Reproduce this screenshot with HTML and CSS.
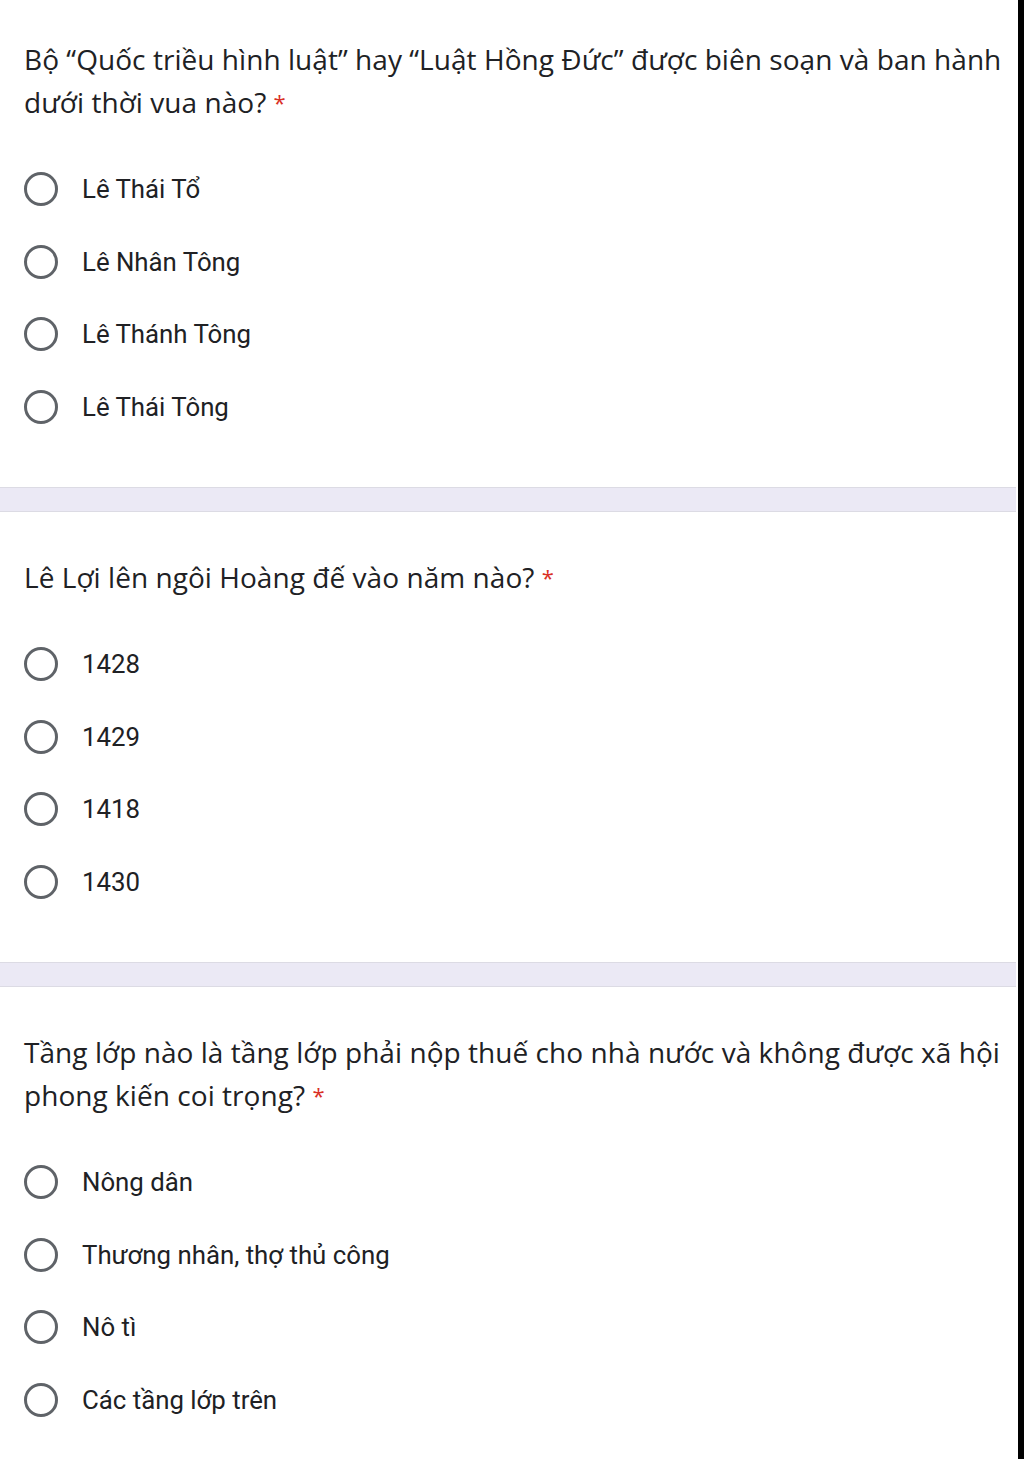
FILE: index.html
```html
<!DOCTYPE html>
<html lang="vi">
<head>
<meta charset="utf-8">
<title>Form</title>
<link rel="stylesheet" href="styles.css">
</head>
<body>
<div class="page">
  <section class="question first">
    <div class="title">Bộ “Quốc triều hình luật” hay “Luật Hồng Đức” được biên soạn và ban hành dưới thời vua nào? <span class="req">*</span></div>
    <div class="options">
      <div class="option"><span class="radio"></span><span class="label">Lê Thái Tổ</span></div>
      <div class="option"><span class="radio"></span><span class="label">Lê Nhân Tông</span></div>
      <div class="option"><span class="radio"></span><span class="label">Lê Thánh Tông</span></div>
      <div class="option"><span class="radio"></span><span class="label">Lê Thái Tông</span></div>
    </div>
  </section>
  <div class="band"></div>
  <section class="question">
    <div class="title">Lê Lợi lên ngôi Hoàng đế vào năm nào? <span class="req">*</span></div>
    <div class="options">
      <div class="option"><span class="radio"></span><span class="label">1428</span></div>
      <div class="option"><span class="radio"></span><span class="label">1429</span></div>
      <div class="option"><span class="radio"></span><span class="label">1418</span></div>
      <div class="option"><span class="radio"></span><span class="label">1430</span></div>
    </div>
  </section>
  <div class="band"></div>
  <section class="question">
    <div class="title">Tầng lớp nào là tầng lớp phải nộp thuế cho nhà nước và không được xã hội phong kiến coi trọng? <span class="req">*</span></div>
    <div class="options">
      <div class="option"><span class="radio"></span><span class="label">Nông dân</span></div>
      <div class="option"><span class="radio"></span><span class="label">Thương nhân, thợ thủ công</span></div>
      <div class="option"><span class="radio"></span><span class="label">Nô tì</span></div>
      <div class="option"><span class="radio"></span><span class="label">Các tầng lớp trên</span></div>
    </div>
  </section>
</div>
</body>
</html>
```

FILE: styles.css
```css
html, body {
  margin: 0;
  padding: 0;
  background: #000;
}
.page {
  width: 1018px;
  min-height: 1459px;
  background: #fff;
  box-sizing: border-box;
}
.question {
  padding: 44px 0 44px 24px;
}
.question.first {
  padding-top: 38px;
}
.title {
  font-family: "Open Sans", sans-serif;
  font-size: 28px;
  line-height: 43px;
  color: #202124;
  letter-spacing: 0.05px;
}
.req {
  color: #d93025;
  font-size: 22px;
  vertical-align: 2px;
}
.options {
  margin-top: 29px;
  display: flex;
  flex-direction: column;
}
.option {
  height: 72.5px;
  display: flex;
  align-items: center;
  gap: 24px;
}
.radio {
  width: 34px;
  height: 34px;
  box-sizing: border-box;
  border: 3px solid #5f6368;
  border-radius: 50%;
  flex: none;
}
.label {
  font-family: Roboto, sans-serif;
  font-size: 25.8px;
  color: #202124;
}
.band {
  height: 25px;
  box-sizing: border-box;
  margin-right: 2px;
  background: #ebe9f5;
  border-top: 1px solid #dcdbe4;
  border-bottom: 1px solid #dcdbe4;
}
```
